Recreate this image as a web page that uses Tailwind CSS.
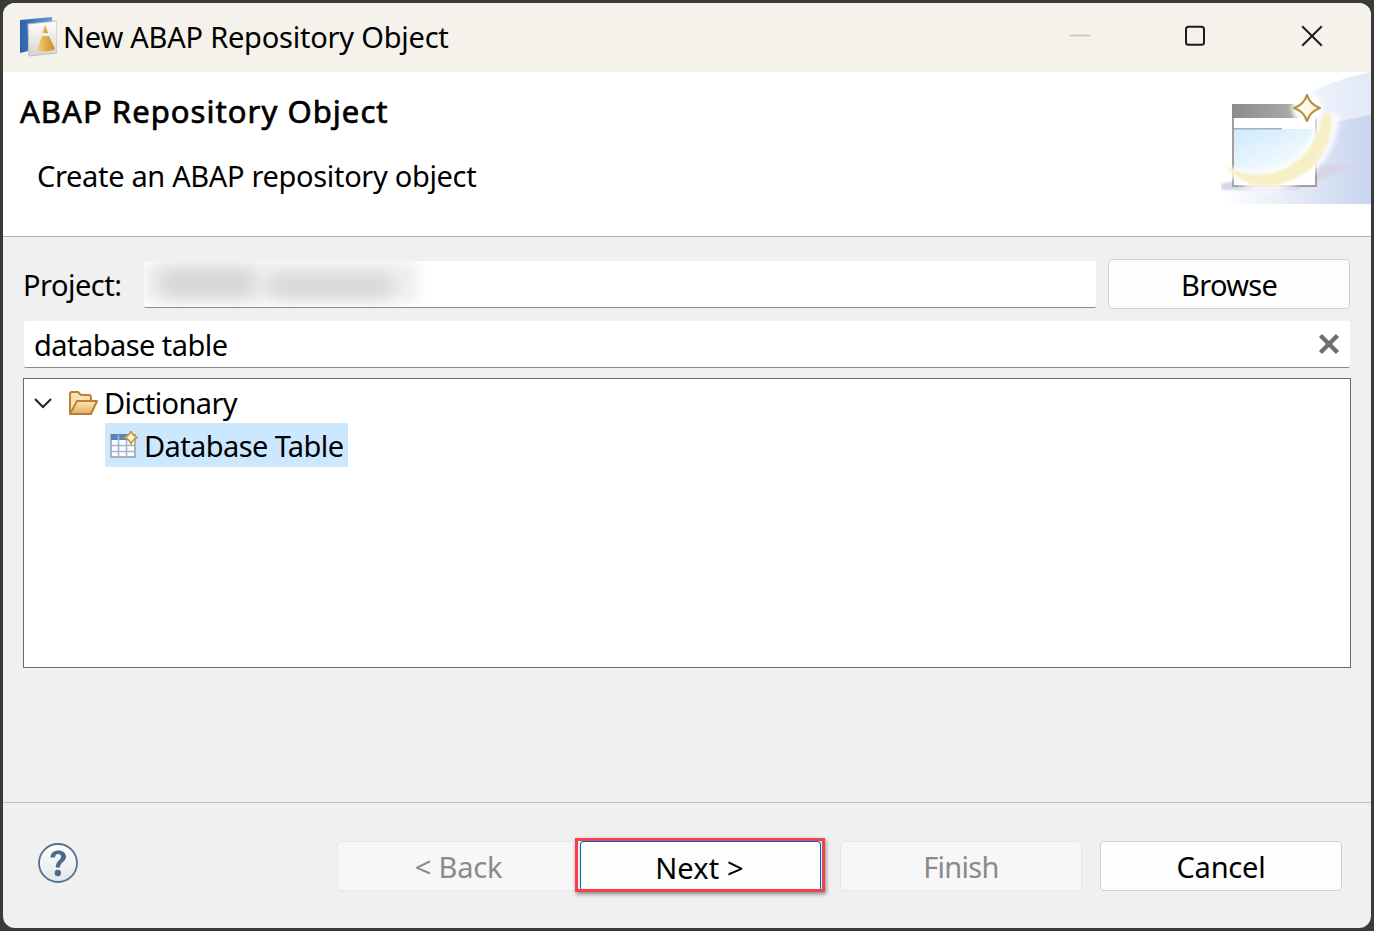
<!DOCTYPE html>
<html><head><meta charset="utf-8"><script src="https://cdn.jsdelivr.net/npm/@tailwindcss/browser@4"></script></head>
<body class="m-0 bg-[#3a3a3a]">
<div class="w-[1374px] h-[931px] p-[3px] font-['Noto_Sans',sans-serif] text-[29px] leading-[40px] text-black overflow-hidden whitespace-nowrap">
<div class="w-[1368px] h-[925px] rounded-[12px] overflow-hidden flex flex-col bg-[#f0f0f0]">

<!-- title bar -->
<div class="h-[69px] shrink-0 bg-[#f5f1eb] flex items-center pb-[2px]">
  <svg class="ml-[16px] w-[38px] h-[40px] shrink-0" viewBox="0 0 38 40">
    <defs>
      <linearGradient id="b1" x1="0" x2="1" y1="0" y2="0"><stop offset="0" stop-color="#2a62a8"/><stop offset="1" stop-color="#6a9bd0"/></linearGradient>
      <linearGradient id="c1" x1="0" x2="0" y1="0" y2="1"><stop offset="0" stop-color="#ffffff"/><stop offset="1" stop-color="#d4d4d4"/></linearGradient>
      <linearGradient id="y1" x1="0" x2="1" y1="0" y2="0"><stop offset="0" stop-color="#f5d27a"/><stop offset="1" stop-color="#c98a1f"/></linearGradient>
    </defs>
    <path d="M1 3 L33 0 L33 6 L9 8 L9 34 L1 36 Z" fill="url(#b1)"/>
    <path d="M9 7 L38 4 L38 36 L10 39 Z" fill="url(#c1)" stroke="#bdbdbd" stroke-width="1"/>
    <path d="M26 8 L29 16 L23 16 Z" fill="url(#y1)"/>
    <path d="M23 19 L30 19 L36 32 C31 35 22 35 18 33 Z" fill="url(#y1)"/>
  </svg>
  <div class="ml-[6px] tracking-[-0.22px]">New ABAP Repository Object</div>
  <div class="ml-auto flex items-center -mt-[1px]">
    <svg class="w-[22px] h-[22px]" viewBox="0 0 22 22"><path d="M0 10.5H20" stroke="#c8c5c0" stroke-width="1.6"/></svg>
    <svg class="ml-[92px] w-[22px] h-[22px]" viewBox="0 0 22 22"><rect x="2" y="1.8" width="18" height="18" rx="2.5" fill="none" stroke="#1c1c1c" stroke-width="2"/></svg>
    <svg class="ml-[95px] mr-[48px] w-[22px] h-[22px]" viewBox="0 0 22 22"><path d="M1.2 1.2L20.8 20.8M20.8 1.2L1.2 20.8" stroke="#1c1c1c" stroke-width="2"/></svg>
  </div>
</div>

<!-- banner -->
<div class="h-[165px] shrink-0 bg-white border-b border-[#b4b4b4] flex justify-between">
  <div class="pl-[17px]">
    <div class="mt-[19px] text-[31px] leading-[40px] tracking-[1.05px] [-webkit-text-stroke:0.7px_black]">ABAP Repository Object</div>
    <div class="mt-[25px] ml-[17px] tracking-[-0.33px]">Create an ABAP repository object</div>
  </div>
  <svg class="w-[150px] h-[132px] shrink-0" viewBox="0 0 150 132">
    <defs>
      <linearGradient id="bg" x1="0" x2="1" y1="0" y2="0"><stop offset="0" stop-color="#ffffff"/><stop offset="1" stop-color="#c8d5ef"/></linearGradient>
      <linearGradient id="bg2" x1="0" x2="1" y1="0" y2="0"><stop offset="0" stop-color="#ffffff"/><stop offset="1" stop-color="#e2e9f8"/></linearGradient>
      <linearGradient id="bar" x1="0" x2="1" y1="0" y2="0"><stop offset="0" stop-color="#8c8c8c"/><stop offset="0.7" stop-color="#a8a8a8"/><stop offset="1" stop-color="#e8e8e8"/></linearGradient>
      <linearGradient id="pane" x1="0" x2="0.6" y1="0" y2="1"><stop offset="0" stop-color="#cdeafd"/><stop offset="1" stop-color="#ffffff"/></linearGradient>
      <filter id="gl" x="-20%" y="-20%" width="140%" height="140%"><feGaussianBlur stdDeviation="2.5"/></filter>
      <filter id="gs" x="-20%" y="-20%" width="140%" height="140%"><feGaussianBlur stdDeviation="1"/></filter>
      <filter id="gt" x="-20%" y="-20%" width="140%" height="140%"><feGaussianBlur stdDeviation="1"/></filter>
    </defs>
    <path d="M0 132V120C50 110 90 60 88 22C105 12 128 4 150 0V132Z" fill="url(#bg2)"/>
    <path d="M0 132V122C50 118 92 90 108 52C122 48 136 46 150 43V132Z" fill="url(#bg)"/>
    <path d="M96 92H138L75 118H0V112Z" fill="#d6d6e6" filter="url(#gs)"/>
    <rect x="11" y="32" width="85" height="83" fill="#a0a0a0"/>
    <rect x="13" y="46" width="81" height="67" fill="#fff"/>
    <rect x="11" y="32" width="85" height="14" fill="url(#bar)"/>
    <rect x="13" y="57" width="81" height="55" fill="url(#pane)"/>
    <rect x="13" y="56" width="48" height="1.5" fill="#9fb1bb"/>
    <path d="M0 92C20 100 40 102 50 98C75 92 92 72 97 42L118 42C118 85 85 122 40 119C22 118 8 106 0 92Z" fill="#fff" filter="url(#gl)" opacity="0.85"/>
    <path d="M4 94C20 102 36 104 50 101C75 96 96 75 100 46C103 40 109 40 111 46C112 80 85 116 40 114C25 113 12 104 4 94Z" fill="#f9efc6" filter="url(#gt)"/>
    <circle cx="86" cy="36" r="15" fill="#fff" filter="url(#gl)"/>
    <path d="M86 23C88 29 93 34 99 36C93 38 88 43 86 49C84 43 79 38 73 36C79 34 84 29 86 23Z" fill="#fdf7e3" stroke="#b4913f" stroke-width="2.2" stroke-linejoin="round"/>
  </svg>
</div>

<!-- body -->
<div class="flex-1 flex flex-col min-h-0">
  <div class="mt-[24px] ml-[20px] mr-[21px] flex items-start">
    <div class="w-[121px] shrink-0 h-[47px] flex items-center tracking-[-0.5px]">Project:</div>
    <div class="w-[953px] h-[47px] bg-white border-b border-[#8a8a8a] rounded-[2px] relative overflow-hidden">
      <div class="absolute left-0 top-0 w-[275px] h-[40px] bg-[#f1f1f1] blur-[6px]"></div>
      <div class="absolute left-[16px] top-[8px] w-[95px] h-[28px] bg-[#d2d2d2] blur-[10px]"></div>
      <div class="absolute left-[125px] top-[14px] w-[125px] h-[22px] bg-[#d2d2d2] blur-[10px]"></div>
    </div>
    <button class="ml-[12px] w-[242px] h-[50px] -mt-[2px] pt-[2px] bg-[#fdfdfd] border border-[#d0d0d0] rounded-[4px] tracking-[-0.7px]">Browse</button>
  </div>
  <div class="mt-[12px] mx-[21px] w-[1326px] h-[47px] pt-[1px] bg-white border-b border-[#8a8a8a] rounded-[2px] flex items-center justify-between">
    <span class="ml-[10px] tracking-[-0.55px]">database table</span>
    <svg class="mr-[10px] -mt-[2px] w-[22px] h-[22px]" viewBox="0 0 22 22"><path d="M2.5 2.5L19.5 19.5M19.5 2.5L2.5 19.5" stroke="#6e6e6e" stroke-width="4.4"/></svg>
  </div>
  <div class="mt-[10px] mx-[20px] w-[1328px] h-[290px] bg-white border border-[#6a6a6a] pt-[3px]">
    <div class="h-[41px] flex items-center">
      <svg class="ml-[10px] w-[18px] h-[12px]" viewBox="0 0 18 12"><path d="M1 2L9 10L17 2" fill="none" stroke="#222" stroke-width="2"/></svg>
      <svg class="ml-[16px] w-[31px] h-[26px]" viewBox="0 0 31 26">
        <defs><linearGradient id="f" x1="0" x2="0" y1="0" y2="1"><stop offset="0" stop-color="#fbe6b4"/><stop offset="1" stop-color="#e6ad5c"/></linearGradient></defs>
        <path d="M2 23V4C2 2 3 2 4 2H10L13 5H21C23 5 23 6 23 8V10" fill="#f9e2ad" stroke="#b9803a" stroke-width="2"/>
        <path d="M2 24L9 11H29L23 24Z" fill="url(#f)" stroke="#b9803a" stroke-width="2" stroke-linejoin="round"/>
      </svg>
      <span class="ml-[5px] tracking-[-0.6px]">Dictionary</span>
    </div>
    <div class="ml-[81px] w-[243px] h-[44px] bg-[#cce8ff] rounded-[2px] flex items-center">
      <svg class="ml-[5px] w-[28px] h-[28px]" viewBox="0 0 28 28">
        <rect x="1" y="4" width="24" height="22" fill="#fff" stroke="#a9b0b8" stroke-width="2"/>
        <rect x="1" y="3" width="24" height="6" fill="#5d82b8"/>
        <path d="M8.500 4V26M16.500 9V26M1 14.500H25M1 20.500H25" stroke="#9fb6d6" stroke-width="1.6"/>
        <path d="M21 0C22 3 24 5 27 6.500C24 8 22 10 21 13C20 10 18 8 15 6.500C18 5 20 3 21 0Z" fill="#fdf3d0" stroke="#c39a3d" stroke-width="1.6"/>
      </svg>
      <span class="ml-[6px] mt-[1px] tracking-[-0.6px]">Database Table</span>
    </div>
  </div>
  <div class="mt-[134px] h-px shrink-0 bg-[#c0c0c0]"></div>
  <div class="flex-1 flex items-start">
    <svg class="ml-[35px] mt-[40px] w-[40px] h-[40px] shrink-0" viewBox="0 0 40 40">
      <defs><linearGradient id="h" x1="0" x2="0" y1="0" y2="1"><stop offset="0" stop-color="#fff"/><stop offset="1" stop-color="#e4e6e9"/></linearGradient></defs>
      <circle cx="20" cy="20" r="19" fill="url(#h)" stroke="#54708f" stroke-width="1.800"/>
      <path d="M12.500 14.500C12.500 9.800 16 7.500 20.300 7.500C25 7.500 28 10 28 13.800C28 19 22 19 22 24.500H17.800C17.800 17.500 23 17.500 23 13.800C23 12 22 11 20 11C18 11 17 12.500 17 14.500Z" fill="#4f6a8f"/>
      <circle cx="19.800" cy="30" r="3.200" fill="#4f6a8f"/>
    </svg>
    <div class="ml-[259px] mt-[38px] flex items-start">
      <button class="w-[243px] h-[50px] pt-[2px] bg-[#f7f7f7] border border-[#e8e8e8] rounded-[4px] text-[#8a8a8a] tracking-[-0.2px]">&lt; Back</button>
      <div class="relative w-[241px] h-[50px]">
        <button class="block w-full h-full pt-[2px] pr-[2px] bg-[#fdfdfd] border-x-[1.5px] border-t-[1.5px] border-[#0067c0] rounded-[4px] tracking-[0.15px]">Next &gt;</button>
        <div class="absolute -left-[5px] -top-[3px] w-[250px] h-[54px] border-[3px] border-[#f4404a] shadow-[1px_2px_4px_rgba(0,0,0,0.45)]"></div>
      </div>
      <button class="ml-[19px] w-[242px] h-[50px] pt-[2px] bg-[#f7f7f7] border border-[#e8e8e8] rounded-[4px] text-[#8a8a8a] tracking-[-0.7px]">Finish</button>
      <button class="ml-[18px] w-[242px] h-[50px] pt-[2px] bg-[#fdfdfd] border border-[#d0d0d0] rounded-[4px] tracking-[-0.2px]">Cancel</button>
    </div>
  </div>
</div>
</div>
</div>
</body></html>
